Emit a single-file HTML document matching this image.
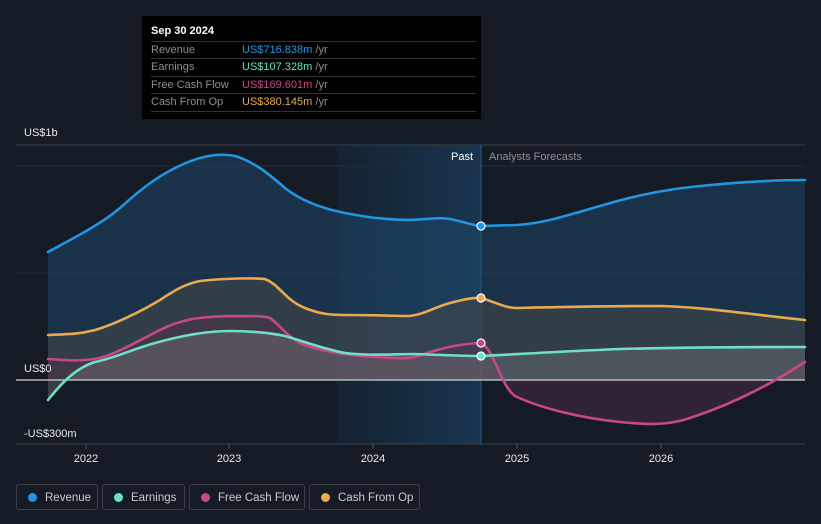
<!DOCTYPE html>
<html><head><meta charset="utf-8"><style>
html,body{margin:0;padding:0;background:#151b25;width:821px;height:524px;overflow:hidden;font-family:"Liberation Sans",sans-serif}
.tt{position:absolute;left:142px;top:16px;width:339px;height:103px;background:#000;color:#fff;font-size:11px}
.tt .h{position:absolute;left:9px;top:9px;font-weight:bold;font-size:11px}
.tt .r{position:absolute;left:9px;width:325px;height:17px;border-top:1px solid #333;line-height:16px;color:#8b8f96}
.tt .r span.v{position:absolute;left:91px}
.tt .r span.u{color:#8b8f96}
.leg{position:absolute;top:484px;height:26px;border:1px solid #3a3f48;border-radius:3px;color:#c9ccd1;font-size:11.5px;line-height:26px;box-sizing:border-box}
.leg i{position:absolute;left:11px;top:8px;width:9px;height:9px;border-radius:50%}
.leg span{position:absolute;left:28px}
</style></head><body>
<svg width="821" height="524" style="position:absolute;left:0;top:0">
<defs>
<linearGradient id="pastg" x1="0" x2="1" y1="0" y2="0"><stop offset="0" stop-color="#1a4a72" stop-opacity="0.15"/><stop offset="1" stop-color="#1a4a72" stop-opacity="0.55"/></linearGradient>
</defs>
<rect x="337" y="145" width="144" height="299" fill="url(#pastg)"/>
<line x1="16" y1="145" x2="805" y2="145" stroke="#3a404a" stroke-width="1"/>
<line x1="16" y1="166" x2="805" y2="166" stroke="#252b35" stroke-width="1"/>
<line x1="16" y1="273" x2="805" y2="273" stroke="#252b35" stroke-width="1"/>
<line x1="16" y1="444" x2="805" y2="444" stroke="#3a404a" stroke-width="1"/>
<line x1="481" y1="145" x2="481" y2="444" stroke="#2c5a80" stroke-width="1"/>
<path d="M48,252 C70,240 100,225 120,208 C140,190 155,178 175,168 C195,158 215,152 235,156 C255,162 270,175 285,188 C300,200 320,208 345,213 C375,219 395,220 410,220 C430,219 440,217 450,219 C465,222 475,226 481,226 L517,225 C545,223 565,216 600,206 C630,197 660,190 700,186 C740,182 775,180 805,180 L805,380 L48,380Z" fill="#1d4a6e" fill-opacity="0.5"/>
<path d="M48,335 C70,334 80,334 95,330 C115,324 140,312 160,300 C175,290 185,284 200,281 C225,278 255,278 265,279 C280,285 285,300 305,308 C320,314 330,315 345,315 C375,315 395,316 410,316 C425,314 435,307 450,303 C465,299 475,297 481,298 C495,302 505,308 517,308 C560,307 620,306 661,306 C700,307 740,313 805,320 L805,380 L48,380Z" fill="#4a4a45" fill-opacity="0.5"/>
<path d="M48,359 C65,360 80,362 100,358 C120,352 140,340 160,330 C180,320 195,317 230,316 C255,316 265,316 270,318 C280,325 290,340 305,345 C325,352 345,355 375,357 C395,358 405,359 415,357 C435,350 455,344 481,343 C495,350 500,385 515,396 C540,408 580,418 620,422 C650,425 670,425 690,418 C730,405 770,385 805,362 L805,380 L48,380Z" fill="#5a2f48" fill-opacity="0.4"/>
<path d="M48,400 C60,385 75,368 95,362 C115,358 130,350 155,343 C180,336 205,331 230,331 C255,331 270,333 285,336 C300,340 320,348 345,353 C370,356 395,354 415,354 C440,355 465,356 481,356 C520,354 570,351 620,349 C660,348 720,347 805,347 L805,380 L48,380Z" fill="#8a8a90" fill-opacity="0.3"/>
<line x1="16" y1="380" x2="805" y2="380" stroke="#cfd2d6" stroke-width="1.2"/>
<g fill="none" stroke-width="2.6" stroke-linecap="round">
<path d="M48,252 C70,240 100,225 120,208 C140,190 155,178 175,168 C195,158 215,152 235,156 C255,162 270,175 285,188 C300,200 320,208 345,213 C375,219 395,220 410,220 C430,219 440,217 450,219 C465,222 475,226 481,226 L517,225 C545,223 565,216 600,206 C630,197 660,190 700,186 C740,182 775,180 805,180" stroke="#2394df"/>
<path d="M48,335 C70,334 80,334 95,330 C115,324 140,312 160,300 C175,290 185,284 200,281 C225,278 255,278 265,279 C280,285 285,300 305,308 C320,314 330,315 345,315 C375,315 395,316 410,316 C425,314 435,307 450,303 C465,299 475,297 481,298 C495,302 505,308 517,308 C560,307 620,306 661,306 C700,307 740,313 805,320" stroke="#e8a951"/>
<path d="M48,359 C65,360 80,362 100,358 C120,352 140,340 160,330 C180,320 195,317 230,316 C255,316 265,316 270,318 C280,325 290,340 305,345 C325,352 345,355 375,357 C395,358 405,359 415,357 C435,350 455,344 481,343 C495,350 500,385 515,396 C540,408 580,418 620,422 C650,425 670,425 690,418 C730,405 770,385 805,362" stroke="#c7488a"/>
<path d="M48,400 C60,385 75,368 95,362 C115,358 130,350 155,343 C180,336 205,331 230,331 C255,331 270,333 285,336 C300,340 320,348 345,353 C370,356 395,354 415,354 C440,355 465,356 481,356 C520,354 570,351 620,349 C660,348 720,347 805,347" stroke="#6ee0c8"/>
</g>
<g stroke="#fff" stroke-width="1.2">
<circle cx="481" cy="226" r="4" fill="#2394df"/>
<circle cx="481" cy="298" r="4" fill="#e8a951"/>
<circle cx="481" cy="343" r="4" fill="#c7488a"/>
<circle cx="481" cy="356" r="4" fill="#6ee0c8"/>
</g>
<g stroke="#555b64"><line x1="86" y1="444" x2="86" y2="449"/><line x1="229" y1="444" x2="229" y2="449"/><line x1="373" y1="444" x2="373" y2="449"/><line x1="517" y1="444" x2="517" y2="449"/><line x1="661" y1="444" x2="661" y2="449"/></g>
<g font-family="Liberation Sans, sans-serif" font-size="11" fill="#e6e8eb">
<text x="24" y="136">US$1b</text>
<text x="24" y="372">US$0</text>
<text x="24" y="437">-US$300m</text>
<text x="86" y="462" text-anchor="middle">2022</text>
<text x="229" y="462" text-anchor="middle">2023</text>
<text x="373" y="462" text-anchor="middle">2024</text>
<text x="517" y="462" text-anchor="middle">2025</text>
<text x="661" y="462" text-anchor="middle">2026</text>
<text x="473" y="160" text-anchor="end" fill="#fff">Past</text>
<text x="489" y="160" fill="#8b9098">Analysts Forecasts</text>
</g>
</svg>
<div class="tt">
<div class="h">Sep 30 2024</div>
<div class="r" style="top:25px">Revenue<span class="v"><span style="color:#2394df">US$716.838m</span> <span class="u">/yr</span></span></div>
<div class="r" style="top:42px">Earnings<span class="v"><span style="color:#6ee0c8">US$107.328m</span> <span class="u">/yr</span></span></div>
<div class="r" style="top:60px">Free Cash Flow<span class="v"><span style="color:#c7488a">US$169.601m</span> <span class="u">/yr</span></span></div>
<div class="r" style="top:77px;border-bottom:1px solid #333">Cash From Op<span class="v"><span style="color:#e8a951">US$380.145m</span> <span class="u">/yr</span></span></div>
</div>
<div class="leg" style="left:16px;width:82px"><i style="background:#2394df"></i><span>Revenue</span></div>
<div class="leg" style="left:102px;width:83px"><i style="background:#6ee0c8"></i><span>Earnings</span></div>
<div class="leg" style="left:189px;width:116px"><i style="background:#c7488a"></i><span>Free Cash Flow</span></div>
<div class="leg" style="left:309px;width:111px"><i style="background:#e8a951"></i><span>Cash From Op</span></div>
</body></html>
